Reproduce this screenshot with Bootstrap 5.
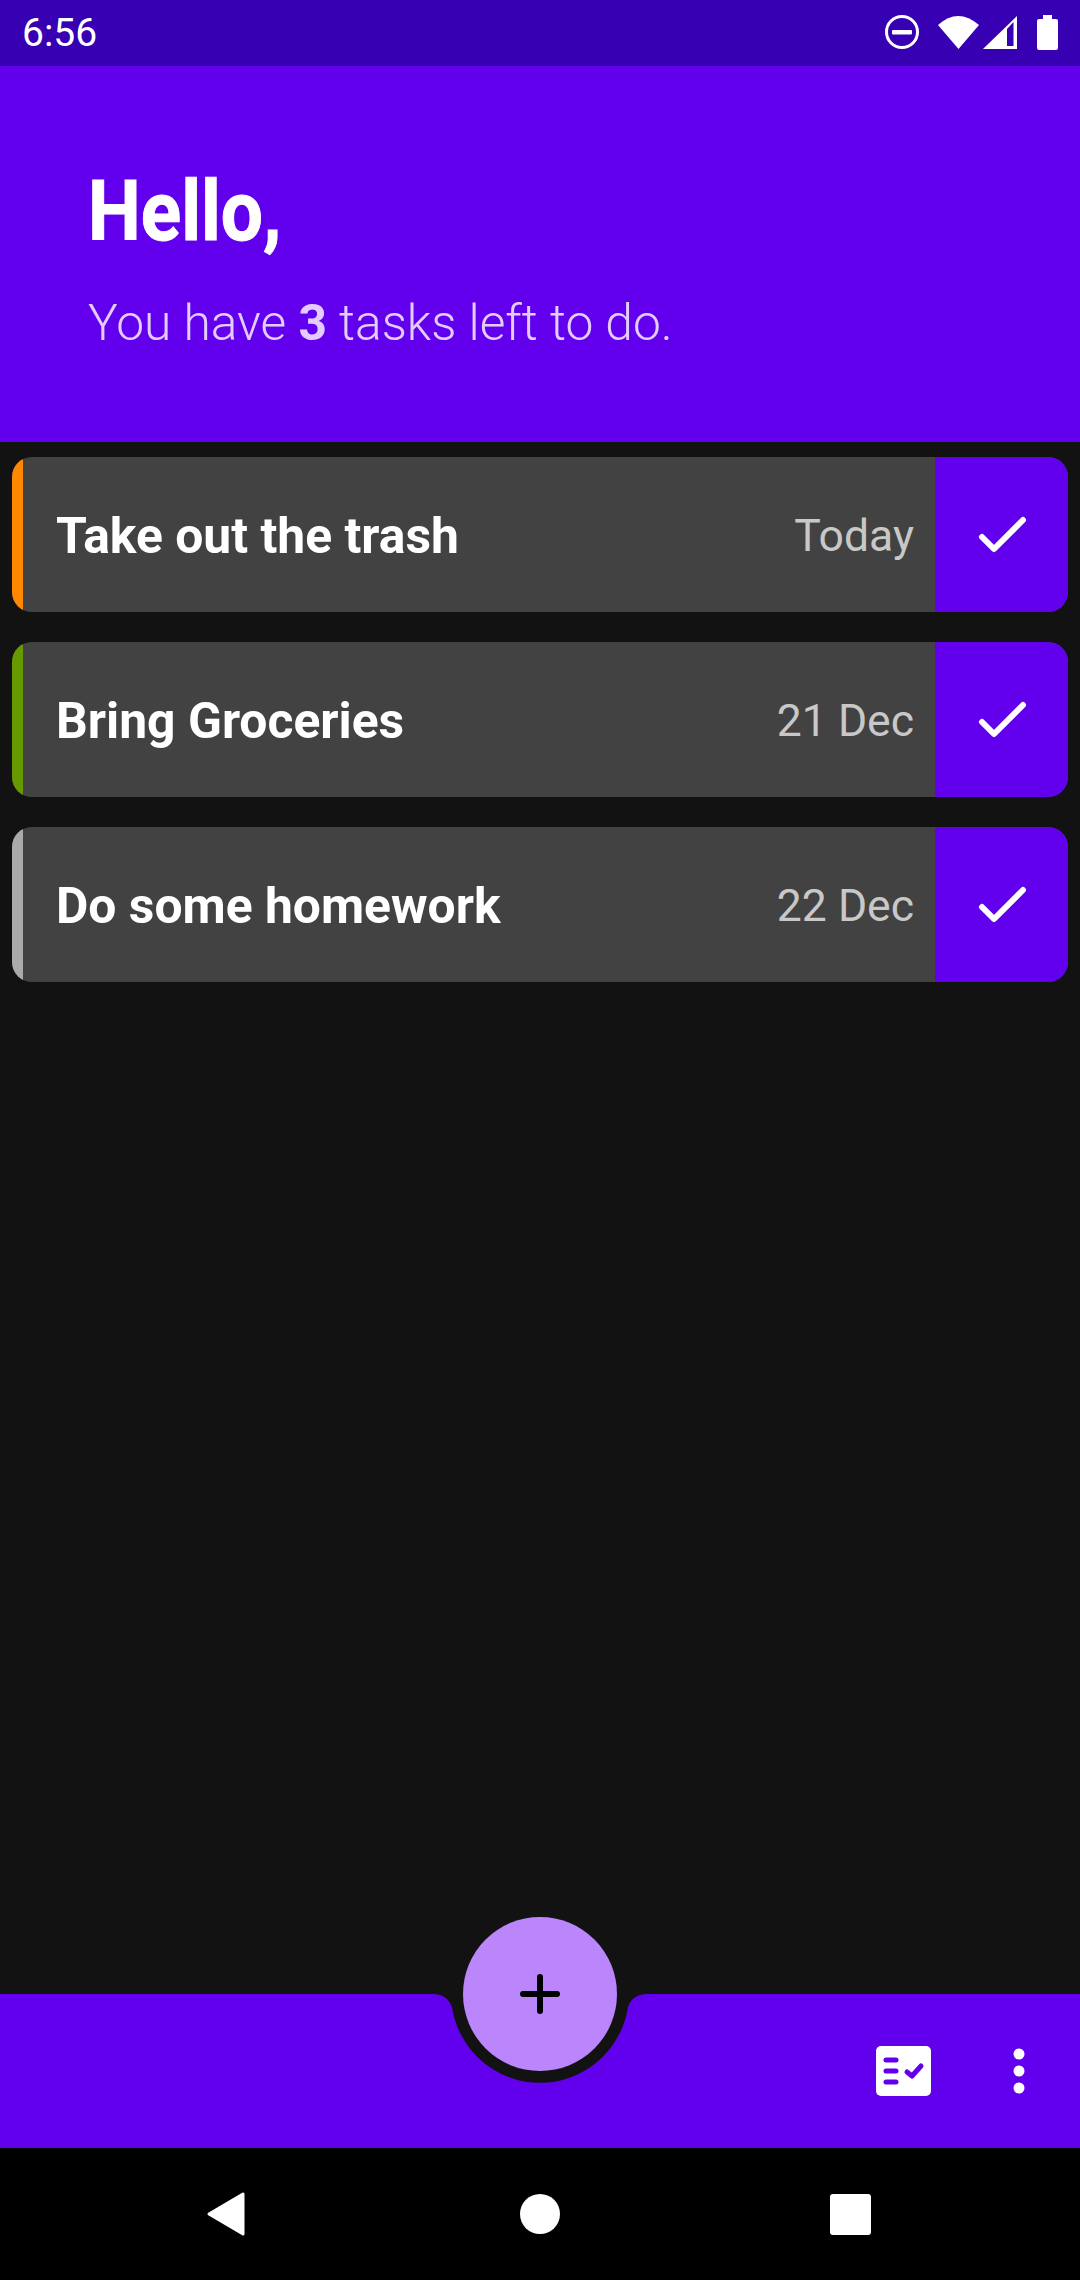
<!DOCTYPE html>
<html lang="en">
<head>
    <meta charset="UTF-8">
    <meta name="viewport" content="width=device-width, initial-scale=1.0">
    <title>Tasks</title>
    <link href="https://cdn.jsdelivr.net/npm/bootstrap@5.3.0/dist/css/bootstrap.min.css" rel="stylesheet">
    <style>
        body { background: #121212; font-family: Roboto, "Liberation Sans", sans-serif; width: 1080px; height: 2280px; overflow: hidden; }
        .status-bar { height: 66px; background: #3700b3; padding: 0 0 0 22px; font-size: 39px; }
        .hero { height: 376px; background: #6200ee; padding: 97px 0 0 88px; }
        .hero-title { font-size: 84px; font-weight: 700; line-height: 98px; margin: 0 0 34px; transform: scaleX(.89); transform-origin: left center; -webkit-text-stroke: 1px #fff; }
        .hero-sub { font-size: 49.7px; font-weight: 300; line-height: 56px; color: #e3ccff; margin: 0; }
        .hero-sub b { font-weight: 700; }
        .task-list { padding: 15px 12px 0; gap: 30px; }
        .task-row { height: 155px; background: #424242; border-radius: 20px; overflow: hidden; }
        .task-strip { width: 11px; }
        .task-name { font-size: 49.8px; font-weight: 700; color: #fff; padding: 3px 0 0 33px; }
        .task-date { font-size: 44.5px; color: #c8c8c8; padding: 3px 21px 0 0; }
        .task-check { width: 133px; background: #6200ee; padding-left: 2px; }
        .app-bar { height: 154px; background: #6200ee; padding-right: 55px; }
        .notch { left: 433px; top: 0; }
        .fab { left: 463px; top: -77px; width: 154px; height: 154px; background: #bb86fc; }
        .bar-list { margin-right: 82px; }
        .nav-bar { height: 132px; background: #000; padding: 0 209px 0 206px; }
    </style>
</head>
<body class="d-flex flex-column text-white">
    <div class="status-bar d-flex justify-content-between align-items-center flex-shrink-0">
        <span>6:56</span>
        <svg width="200" height="66" viewBox="880 0 200 66">
            <circle cx="902" cy="32" r="15.5" fill="none" stroke="#fff" stroke-width="3"/>
            <rect x="892" y="30" width="20" height="4.5" rx="1" fill="#fff"/>
            <path d="M938 25Q958 7 979 25L958.500 49Z" fill="#fff"/>
            <path d="M1017 16V49H983Z" fill="#fff"/>
            <path d="M1007 29L1013.500 22V46H1007Z" fill="#3700b3"/>
            <path d="M1043 15H1052V19H1056Q1058 19 1058 21V48Q1058 50 1056 50H1039Q1037 50 1037 48V21Q1037 19 1039 19H1043Z" fill="#fff"/>
        </svg>
    </div>

    <header class="hero flex-shrink-0">
        <h1 class="hero-title">Hello,</h1>
        <p class="hero-sub">You have <b>3</b> tasks left to do.</p>
    </header>

    <main class="task-list d-flex flex-column flex-grow-1">
        <div class="task-row d-flex align-items-stretch">
            <div class="task-strip" style="background:#ff8800"></div>
            <div class="task-name flex-grow-1 d-flex align-items-center">Take out the trash</div>
            <div class="task-date d-flex align-items-center">Today</div>
            <div class="task-check d-flex align-items-center justify-content-center">
                <svg width="56" height="44" viewBox="975 515 56 44"><path d="M982 539L994 551L1023 522" fill="none" stroke="#fff" stroke-width="6" stroke-linecap="round" stroke-linejoin="round"/></svg>
            </div>
        </div>
        <div class="task-row d-flex align-items-stretch">
            <div class="task-strip" style="background:#669900"></div>
            <div class="task-name flex-grow-1 d-flex align-items-center">Bring Groceries</div>
            <div class="task-date d-flex align-items-center">21 Dec</div>
            <div class="task-check d-flex align-items-center justify-content-center">
                <svg width="56" height="44" viewBox="975 515 56 44"><path d="M982 539L994 551L1023 522" fill="none" stroke="#fff" stroke-width="6" stroke-linecap="round" stroke-linejoin="round"/></svg>
            </div>
        </div>
        <div class="task-row d-flex align-items-stretch">
            <div class="task-strip" style="background:#aaaaaa"></div>
            <div class="task-name flex-grow-1 d-flex align-items-center">Do some homework</div>
            <div class="task-date d-flex align-items-center">22 Dec</div>
            <div class="task-check d-flex align-items-center justify-content-center">
                <svg width="56" height="44" viewBox="975 515 56 44"><path d="M982 539L994 551L1023 522" fill="none" stroke="#fff" stroke-width="6" stroke-linecap="round" stroke-linejoin="round"/></svg>
            </div>
        </div>
    </main>

    <div class="app-bar position-relative d-flex justify-content-end align-items-center flex-shrink-0">
        <svg class="notch position-absolute" width="214" height="90" viewBox="0 0 214 90"><path d="M0 0C10 0 16 5 19 13A89 89 0 0 0 195 13C198 5 204 0 214 0Z" fill="#121212"/></svg>
        <div class="fab position-absolute rounded-circle d-flex align-items-center justify-content-center">
            <svg width="44" height="44" viewBox="0 0 44 44"><path d="M22 5V39M5 22H39" stroke="#000" stroke-width="6" stroke-linecap="round"/></svg>
        </div>
        <svg class="bar-list" width="55" height="50" viewBox="0 0 55 50">
            <rect width="55" height="50" rx="5" fill="#fff"/>
            <path d="M10 14H20M10 25H20M10 36H20" stroke="#6200ee" stroke-width="5" stroke-linecap="round"/>
            <path d="M31 26L36 30L45 20" fill="none" stroke="#6200ee" stroke-width="5" stroke-linecap="round" stroke-linejoin="round"/>
        </svg>
        <svg width="12" height="46" viewBox="0 0 12 46">
            <circle cx="6" cy="6" r="5.500" fill="#fff"/>
            <circle cx="6" cy="23" r="5.500" fill="#fff"/>
            <circle cx="6" cy="40" r="5.500" fill="#fff"/>
        </svg>
    </div>

    <div class="nav-bar d-flex justify-content-between align-items-center flex-shrink-0">
        <svg width="44" height="46" viewBox="0 0 44 46"><path d="M37 3V43L3 23Z" fill="#fff" stroke="#fff" stroke-width="3" stroke-linejoin="round"/></svg>
        <svg width="40" height="40" viewBox="0 0 40 40"><circle cx="20" cy="20" r="20" fill="#fff"/></svg>
        <svg width="41" height="41" viewBox="0 0 41 41"><rect width="41" height="41" rx="3" fill="#fff"/></svg>
    </div>
    <script src="https://cdn.jsdelivr.net/npm/bootstrap@5.3.0/dist/js/bootstrap.bundle.min.js"></script>
</body>
</html>
